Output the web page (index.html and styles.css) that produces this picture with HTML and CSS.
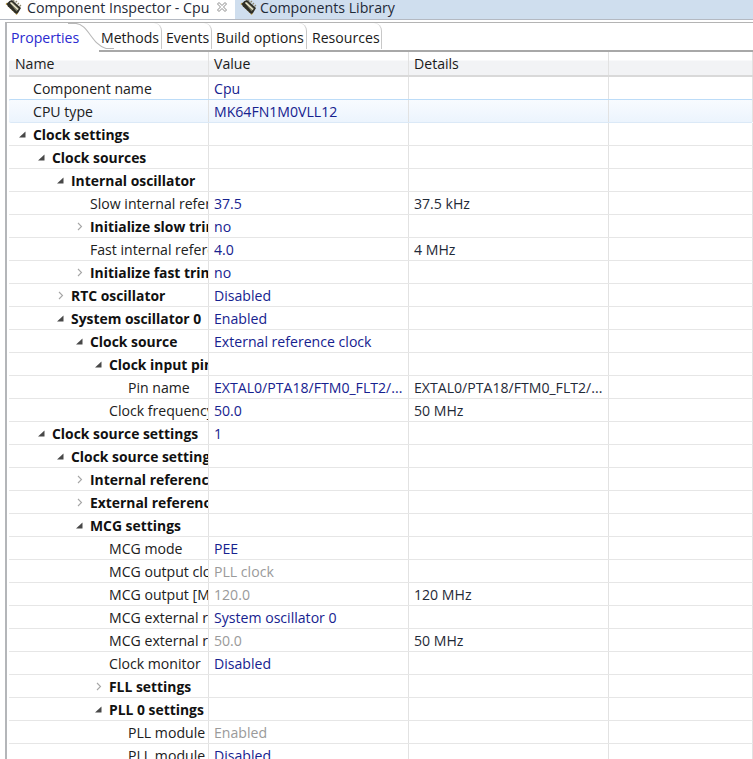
FILE: index.html
```html
<!DOCTYPE html>
<html>
<head>
<meta charset="utf-8">
<link rel="stylesheet" href="styles.css">
<title>Component Inspector</title>
</head>
<body>
<svg class="sprites" width="0" height="0">
<symbol id="chip" viewBox="0 0 17 15">
<path d="M2.500 3 1 4.500M4.500 5 3 6.500M6.500 7 5 8.500M8.500 9 7 10.500M10.500 11 9 12.500M12.500 13 11 14.500" stroke="#c2a24a" stroke-width="1.400" fill="none"/>
<path d="M8 0 9.500 1.500M10.500 2.500 12 1M12.500 4.500 14 3M14.500 6.500 16 5" stroke="#8f8a70" stroke-width="1.200" fill="none"/>
<path d="M4.500 1 7 0l9 8-3 5-2 1-8-7.500-1.500-2.500z" fill="#2e2e26"/>
<path d="M5 3 7 2l7 6.500-2.500 3z" fill="#7c7c66"/>
<path d="M5.500 2.500 13 9.500" stroke="#f0ecd4" stroke-width="1.200" fill="none"/>
</symbol>
<symbol id="open" viewBox="0 0 9 9"><path d="M7.500 1.500V7.500H1z" fill="#484848"/></symbol>
<symbol id="shut" viewBox="0 0 9 9"><path d="M3 1 6.500 4.500 3 8" fill="none" stroke="#a6a6a6" stroke-width="1.100"/></symbol>
<symbol id="x" viewBox="0 0 12 12"><path d="M1.500 3 3 1.500 6 4.500 9 1.500 10.500 3 7.500 6 10.500 9 9 10.500 6 7.500 3 10.500 1.500 9 4.500 6z" fill="#fff" stroke="#8c8c8c" stroke-width="1"/></symbol>
</svg>
<div class="page">
<div class="viewtabs">
<div class="viewtab active"><svg class="chip"><use href="#chip"/></svg><span class="viewtitle">Component Inspector - Cpu</span><svg class="close"><use href="#x"/></svg></div>
<div class="viewtab other"><svg class="chip"><use href="#chip"/></svg><span class="viewtitle">Components Library</span></div>
</div>
<div class="panel">
<div class="tabs">
<div class="tab first">Properties</div>
<div class="tab t2">Methods</div>
<div class="tab t3">Events</div>
<div class="tab t4">Build options</div>
<div class="tab t5">Resources</div>
<svg class="curve" width="46" height="28" viewBox="0 0 46 28"><path d="M0 .5H8C20 1 24 22 38 25.500H46" fill="none" stroke="#b8b8b8" stroke-width="1.100"/></svg>
</div>
<div class="table">
<div class="row head"><div class="c name"><span class="pad">Name</span></div><div class="c">Value</div><div class="c">Details</div><div class="c"></div></div>
<div class="row"><div class="c name l0"><span class="twbox"></span><span>Component name</span></div><div class="c val">Cpu</div><div class="c det"></div><div class="c"></div></div>
<div class="row sel"><div class="c name l0"><span class="twbox"></span><span>CPU type</span></div><div class="c val">MK64FN1M0VLL12</div><div class="c det"></div><div class="c"></div></div>
<div class="row"><div class="c name bold l0"><span class="twbox"><svg class="tw"><use href="#open"/></svg></span><span>Clock settings</span></div><div class="c val"></div><div class="c det"></div><div class="c"></div></div>
<div class="row"><div class="c name bold l1"><span class="twbox"><svg class="tw"><use href="#open"/></svg></span><span>Clock sources</span></div><div class="c val"></div><div class="c det"></div><div class="c"></div></div>
<div class="row"><div class="c name bold l2"><span class="twbox"><svg class="tw"><use href="#open"/></svg></span><span>Internal oscillator</span></div><div class="c val"></div><div class="c det"></div><div class="c"></div></div>
<div class="row"><div class="c name l3"><span class="twbox"></span><span>Slow internal reference clock</span></div><div class="c val">37.5</div><div class="c det">37.5 kHz</div><div class="c"></div></div>
<div class="row"><div class="c name bold l3"><span class="twbox"><svg class="tw"><use href="#shut"/></svg></span><span>Initialize slow trim value</span></div><div class="c val">no</div><div class="c det"></div><div class="c"></div></div>
<div class="row"><div class="c name l3"><span class="twbox"></span><span>Fast internal reference clock</span></div><div class="c val">4.0</div><div class="c det">4 MHz</div><div class="c"></div></div>
<div class="row"><div class="c name bold l3"><span class="twbox"><svg class="tw"><use href="#shut"/></svg></span><span>Initialize fast trim value</span></div><div class="c val">no</div><div class="c det"></div><div class="c"></div></div>
<div class="row"><div class="c name bold l2"><span class="twbox"><svg class="tw"><use href="#shut"/></svg></span><span>RTC oscillator</span></div><div class="c val">Disabled</div><div class="c det"></div><div class="c"></div></div>
<div class="row"><div class="c name bold l2"><span class="twbox"><svg class="tw"><use href="#open"/></svg></span><span>System oscillator 0</span></div><div class="c val">Enabled</div><div class="c det"></div><div class="c"></div></div>
<div class="row"><div class="c name bold l3"><span class="twbox"><svg class="tw"><use href="#open"/></svg></span><span>Clock source</span></div><div class="c val">External reference clock</div><div class="c det"></div><div class="c"></div></div>
<div class="row"><div class="c name bold l4"><span class="twbox"><svg class="tw"><use href="#open"/></svg></span><span>Clock input pin</span></div><div class="c val"></div><div class="c det"></div><div class="c"></div></div>
<div class="row"><div class="c name l5"><span class="twbox"></span><span>Pin name</span></div><div class="c val">EXTAL0/PTA18/FTM0_FLT2/...</div><div class="c det">EXTAL0/PTA18/FTM0_FLT2/...</div><div class="c"></div></div>
<div class="row"><div class="c name l4"><span class="twbox"></span><span>Clock frequency</span></div><div class="c val">50.0</div><div class="c det">50 MHz</div><div class="c"></div></div>
<div class="row"><div class="c name bold l1"><span class="twbox"><svg class="tw"><use href="#open"/></svg></span><span>Clock source settings</span></div><div class="c val">1</div><div class="c det"></div><div class="c"></div></div>
<div class="row"><div class="c name bold l2"><span class="twbox"><svg class="tw"><use href="#open"/></svg></span><span>Clock source setting 0</span></div><div class="c val"></div><div class="c det"></div><div class="c"></div></div>
<div class="row"><div class="c name bold l3"><span class="twbox"><svg class="tw"><use href="#shut"/></svg></span><span>Internal reference clock</span></div><div class="c val"></div><div class="c det"></div><div class="c"></div></div>
<div class="row"><div class="c name bold l3"><span class="twbox"><svg class="tw"><use href="#shut"/></svg></span><span>External reference clock</span></div><div class="c val"></div><div class="c det"></div><div class="c"></div></div>
<div class="row"><div class="c name bold l3"><span class="twbox"><svg class="tw"><use href="#open"/></svg></span><span>MCG settings</span></div><div class="c val"></div><div class="c det"></div><div class="c"></div></div>
<div class="row"><div class="c name l4"><span class="twbox"></span><span>MCG mode</span></div><div class="c val">PEE</div><div class="c det"></div><div class="c"></div></div>
<div class="row"><div class="c name l4"><span class="twbox"></span><span>MCG output clock</span></div><div class="c val grey">PLL clock</div><div class="c det"></div><div class="c"></div></div>
<div class="row"><div class="c name l4"><span class="twbox"></span><span>MCG output [MHz]</span></div><div class="c val grey">120.0</div><div class="c det">120 MHz</div><div class="c"></div></div>
<div class="row"><div class="c name l4"><span class="twbox"></span><span>MCG external ref</span></div><div class="c val">System oscillator 0</div><div class="c det"></div><div class="c"></div></div>
<div class="row"><div class="c name l4"><span class="twbox"></span><span>MCG external ref</span></div><div class="c val grey">50.0</div><div class="c det">50 MHz</div><div class="c"></div></div>
<div class="row"><div class="c name l4"><span class="twbox"></span><span>Clock monitor</span></div><div class="c val">Disabled</div><div class="c det"></div><div class="c"></div></div>
<div class="row"><div class="c name bold l4"><span class="twbox"><svg class="tw"><use href="#shut"/></svg></span><span>FLL settings</span></div><div class="c val"></div><div class="c det"></div><div class="c"></div></div>
<div class="row"><div class="c name bold l4"><span class="twbox"><svg class="tw"><use href="#open"/></svg></span><span>PLL 0 settings</span></div><div class="c val"></div><div class="c det"></div><div class="c"></div></div>
<div class="row"><div class="c name l5"><span class="twbox"></span><span>PLL module</span></div><div class="c val grey">Enabled</div><div class="c det"></div><div class="c"></div></div>
<div class="row"><div class="c name l5"><span class="twbox"></span><span>PLL module</span></div><div class="c val">Disabled</div><div class="c det"></div><div class="c"></div></div>
</div>
</div>
</div>
</body>
</html>
```
FILE: styles.css
```css
html, body { margin: 0; padding: 0; background: #fff; }
body { width: 753px; height: 759px; overflow: hidden; font-family: "Open Sans", "Noto Sans", sans-serif; font-size: 14.1px; color: #1a1a1a; }
.sprites { position: absolute; }
.page { display: flex; flex-direction: column; height: 759px; overflow: hidden; }
.viewtabs { display: flex; height: 20px; background: #cfdeee; border-bottom: 1px solid #b4b9c2; box-sizing: border-box; flex: none; align-items: flex-start; }
.viewtab { display: flex; height: 19px; color: #1f2a38; align-items: flex-start; }
.viewtab.active { background: #fff; width: 235px; box-sizing: border-box; padding-left: 5px; }
.viewtab.other { padding-left: 5px; }
.viewtitle { white-space: nowrap; line-height: 15px; font-size: 14.2px; }
.active .viewtitle { margin-left: 5px; }
.other .viewtitle { margin-left: 3px; }
.chip { width: 17px; height: 15px; flex: none; }
.close { margin-left: 7px; margin-top: 1px; width: 12px; height: 12px; flex: none; }
.panel { flex: 1; margin-left: 5px; border-left: 2px solid #b4b6b9; border-top: 1px solid #b4b4b4; padding-left: 2px; margin-top: 2px; min-height: 0; }
.tabs { position: relative; display: flex; height: 27px; border-bottom: 2px solid #a8a8a8; align-items: flex-start; background: #fff; }
.tab { height: 26px; line-height: 29px; white-space: nowrap; border-right: 1px solid #c8c8c8; border-top-right-radius: 8px; box-sizing: border-box; }
.tab.first { color: #2a2ad0; width: 90px; height: 29px; background: #fff; padding-left: 2px; border-right: none; }
.tab.t2 { width: 63px; padding-left: 2px; }
.tab.t3 { width: 50px; padding-left: 4px; }
.tab.t4 { width: 95px; padding-left: 4px; font-size: 14.3px; }
.tab.t5 { width: 75px; padding-left: 5px; }
.curve { position: absolute; left: 59px; top: 0; }
.table { overflow: hidden; }
.row { display: grid; grid-template-columns: 200px 200px 200px 1fr; height: 23px; box-sizing: border-box; border-bottom: 1px solid #e6e6e6; }
.row.head { height: 26px; margin-top: -1px; background: linear-gradient(#fff 0, #fff 9px, #f2f3f5 10px, #f2f3f5 100%); border-bottom: 2px solid #d9d9d9; }
.row.sel { background: linear-gradient(#f8fbff, #ecf4fd); border-top: 1px solid #bcdcf8; border-bottom: 1px solid #dbe9f7; margin-top: -1px; height: 24px; border-radius: 2px; }
.c { display: flex; align-items: center; padding-left: 5px; border-right: 1px solid #e2e2e2; box-sizing: border-box; white-space: nowrap; overflow: hidden; min-width: 0; }
.name { padding-left: 0; color: #202020; }
.l0 { padding-left: 6px; }
.l1 { padding-left: 25px; }
.l2 { padding-left: 44px; }
.l3 { padding-left: 63px; }
.l4 { padding-left: 82px; }
.l5 { padding-left: 101px; }
.pad { padding-left: 6px; }
.bold { font-weight: 700; color: #111; font-size: 13.9px; }
.twbox { flex: none; width: 18px; height: 14px; padding-left: 3px; box-sizing: border-box; display: flex; align-items: center; }
.tw { width: 9px; height: 9px; }
.val { color: #16228f; }
.grey { color: #9a9a9a; }
.det { color: #1f2a38; }
```
